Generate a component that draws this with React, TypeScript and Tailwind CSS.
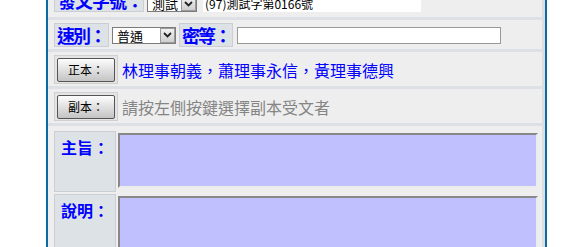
import React from 'react';

const font = { fontFamily: '"Noto Sans CJK TC", "Liberation Sans", sans-serif' };

function Chevron() {
  return (
    <svg width="9" height="6" viewBox="0 0 9 6">
      <path d="M1 1 L4.5 4.5 L8 1" fill="none" stroke="#222" strokeWidth="1.8" />
    </svg>
  );
}

function Select({ value, width }: { value: string; width: string }) {
  return (
    <div className={`flex h-[17px] ${width} items-stretch border border-[#7c7c7c] bg-white`}>
      <span className="flex-1 pl-[4px] text-[13px] leading-[15px] text-black">{value}</span>
      <span className="flex w-[15px] items-center justify-center border border-[#9a9a9a] bg-gradient-to-b from-[#f2f2f2] to-[#cfcfcf]">
        <Chevron />
      </span>
    </div>
  );
}

function Label({ children, className }: { children: React.ReactNode; className: string }) {
  return (
    <div className={`flex whitespace-nowrap border border-[#cbcfd4] bg-[#dde2e7] font-bold text-[#0000ff] ${className}`}>
      {children}
    </div>
  );
}

function Btn({ children }: { children: React.ReactNode }) {
  return (
    <div className="flex h-[29px] w-[64px] items-center justify-center border border-[#d0d0d0] bg-[#e4e4e4]">
      <button className="flex h-[24px] w-[58px] items-center justify-center rounded-[2px] border border-[#555] bg-gradient-to-b from-[#fdfdfd] to-[#c4c4c4] text-[12px] text-black">
        {children}
      </button>
    </div>
  );
}

export default function App() {
  return (
    <div className="h-[247px] w-[567px] overflow-hidden bg-white" style={font}>
      <div className="ml-[46px] -mt-[15px] w-[501px] border-x-2 border-[#0b6ba3] bg-[#eeeeee]">
        <div className="border-r-[3px] border-[#dcdfe2]">
          {/* 發文字號 */}
          <div className="flex items-end gap-[3px] border-b-[3px] border-[#dde1e6] pb-[5px] pl-[6px] pt-[3px]">
            <Label className="h-[24px] w-[90px] items-center pl-[3px] text-[18px] tracking-[-1px]">發文字號：</Label>
            <Select value="測試" width="w-[50px]" />
            <div className="ml-[3px] flex h-[17px] w-[218px] items-center bg-white pl-[2px] text-[12px] text-black">
              (97)測試字第0166號
            </div>
          </div>

          {/* 速別 / 密等 */}
          <div className="flex items-center gap-[3px] border-b-[3px] border-[#dde1e6] pb-[2px] pl-[6px] pt-[3px]">
            <Label className="h-[24px] w-[55px] items-center pl-[2px] text-[18px] tracking-[-2px]">速別：</Label>
            <Select value="普通" width="w-[64px]" />
            <Label className="h-[24px] w-[54px] items-center pl-[2px] text-[18px] tracking-[-2px]">密等：</Label>
            <div className="ml-[1px] h-[17px] w-[264px] border border-[#999] bg-white" />
          </div>

          {/* 正本 */}
          <div className="flex items-center gap-[4px] border-b-[3px] border-[#dde1e6] pb-[2px] pl-[6px] pt-[3px]">
            <Btn>正本：</Btn>
            <span className="text-[16px] text-[#0000ff]">林理事朝義，蕭理事永信，黃理事德興</span>
          </div>

          {/* 副本 */}
          <div className="flex items-center gap-[4px] border-b-[3px] border-[#dde1e6] pb-[2px] pl-[6px] pt-[3px]">
            <Btn>副本：</Btn>
            <span className="text-[16px] text-[#858585]">請按左側按鍵選擇副本受文者</span>
          </div>

          {/* 主旨 / 說明 */}
          <div className="flex flex-col gap-[2px] pl-[6px] pt-[5px]">
            <div className="flex gap-[2px]">
              <Label className="h-[61px] w-[62px] justify-center pt-[3px] text-[16px]">主旨：</Label>
              <div className="pt-[2px]">
                <div className="h-[55px] w-[420px] border-2 border-b-[#ececec] border-l-[#888] border-r-[#ececec] border-t-[#888] bg-[#c0c0ff]" />
              </div>
            </div>
            <div className="flex gap-[2px]">
              <Label className="h-[61px] w-[62px] justify-center pt-[3px] text-[16px]">說明：</Label>
              <div className="pt-[2px]">
                <div className="h-[55px] w-[420px] border-2 border-b-[#ececec] border-l-[#888] border-r-[#ececec] border-t-[#888] bg-[#c0c0ff]" />
              </div>
            </div>
          </div>
        </div>
      </div>
    </div>
  );
}
